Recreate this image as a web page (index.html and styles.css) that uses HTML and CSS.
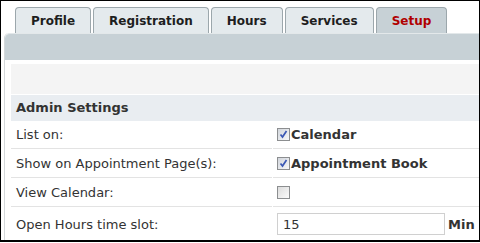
FILE: index.html
```html
<!DOCTYPE html>
<html lang="en">
<head>
    <meta charset="UTF-8">
    <title>Setup</title>
    <link rel="stylesheet" href="styles.css">
</head>
<body>
    <div class="frame">
        <ul class="tabs">
            <li class="tab"><a href="#">Profile</a></li>
            <li class="tab"><a href="#">Registration</a></li>
            <li class="tab"><a href="#">Hours</a></li>
            <li class="tab"><a href="#">Services</a></li>
            <li class="tab active"><a href="#">Setup</a></li>
        </ul>
        <div class="panel">
            <div class="panel-bar"></div>
            <div class="panel-body">
                <div class="toolbar"></div>
                <div class="section-title">Admin Settings</div>
                <div class="settings">
                    <div class="label row-1">List on:</div>
                    <div class="value row-1">
                        <span class="check checked"><svg width="11" height="11" viewBox="0 0 11 11"><path d="M2.5 5.5 L4.5 8 L8.5 2" fill="none" stroke="#3b58b4" stroke-width="1.7"/></svg></span><b>Calendar</b>
                    </div>
                    <div class="label row-2">Show on Appointment Page(s):</div>
                    <div class="value row-2">
                        <span class="check checked"><svg width="11" height="11" viewBox="0 0 11 11"><path d="M2.5 5.5 L4.5 8 L8.5 2" fill="none" stroke="#3b58b4" stroke-width="1.7"/></svg></span><b>Appointment Book</b>
                    </div>
                    <div class="label row-3">View Calendar:</div>
                    <div class="value row-3">
                        <span class="check"></span>
                    </div>
                    <div class="label row-4">Open Hours time slot:</div>
                    <div class="value row-4">
                        <input type="text" class="slot" value="15"><b class="unit">Min</b>
                    </div>
                </div>
            </div>
        </div>
    </div>
</body>
</html>
```

FILE: styles.css
```css
body {
    margin: 0;
    padding: 0;
    background: #fff;
    font-family: 'DejaVu Sans', Verdana, sans-serif;
}
.frame {
    box-sizing: border-box;
    width: 480px;
    height: 242px;
    border: 1px solid #000;
    border-bottom-width: 2px;
    overflow: hidden;
    background: #fff;
}
.tabs {
    list-style: none;
    margin: 6px 0 0 14px;
    padding: 0;
    display: flex;
    gap: 2px;
    height: 26px;
}
.tab {
    box-sizing: border-box;
    height: 26px;
    border: 1px solid #9ca7ac;
    border-bottom: none;
    border-radius: 4px 4px 0 0;
    background-color: #e4eaed;
    display: flex;
    align-items: center;
}
.tab a {
    display: block;
    padding: 1px 15px 0 15px;
    font-size: 12px;
    font-weight: bold;
    color: #1e1e1e;
    text-decoration: none;
}
.tab.active {
    background-color: #c7d1d6;
}
.tab.active a {
    color: #b00000;
}
.panel {
    margin-left: 3px;
    border-left: 1px solid #d4d8da;
    border-top-left-radius: 5px;
}
.panel-bar {
    height: 26px;
    background-color: #c7d1d6;
    border-top: 1px solid #e3e8ea;
    border-top-left-radius: 5px;
}
.panel-body {
    padding: 4px 0 0 6px;
}
.toolbar {
    height: 30px;
    background-color: #f4f4f4;
    border-bottom: 1px solid #fff;
}
.section-title {
    height: 26px;
    line-height: 26px;
    padding-left: 5px;
    background-color: #e9edf1;
    font-size: 13px;
    font-weight: bold;
    color: #333;
}
.settings {
    display: grid;
    grid-template-columns: 261px 1fr;
    column-gap: 1px;
    font-size: 13px;
    color: #333;
}
.label, .value {
    display: flex;
    align-items: center;
    border-bottom: 1px solid #e3e3e3;
}
.label {
    padding-left: 5px;
}
.value {
    padding-left: 4px;
}
.value b {
    font-weight: bold;
}
.row-1 {
    height: 27px;
}
.row-2, .row-3 {
    height: 28px;
}
.row-4 {
    height: 34px;
}
.check {
    box-sizing: border-box;
    width: 13px;
    height: 13px;
    border: 1px solid #8c8e90;
    background: linear-gradient(135deg, #dcdcdc, #fbfbfb);
    display: inline-flex;
    align-items: center;
    justify-content: center;
    margin-right: 1px;
}
.check.checked {
    background: linear-gradient(135deg, #d2d6dc, #f6f7f9);
}
.slot {
    box-sizing: border-box;
    width: 168px;
    height: 22px;
    margin: 0 3px 0 0;
    padding: 0 5px;
    border: 1px solid #d0d0d0;
    font-family: 'DejaVu Sans', Verdana, sans-serif;
    font-size: 13px;
    color: #333;
}
.unit {
    font-size: 13px;
}
```
